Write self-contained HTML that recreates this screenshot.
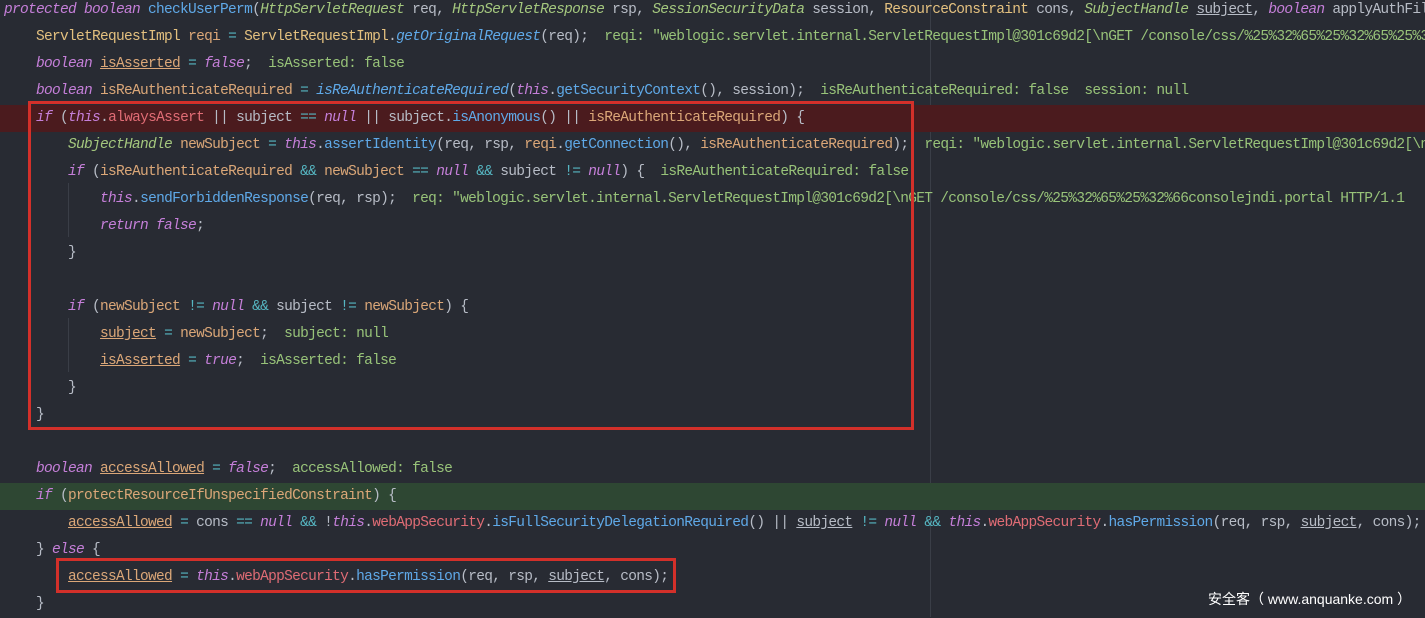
<!DOCTYPE html>
<html><head><meta charset="utf-8"><style>
html,body{margin:0;padding:0;background:#282b33;width:1425px;height:617px;overflow:hidden}
.ed{position:absolute;left:0;top:-3px;width:1425px;font-family:"Liberation Mono",monospace;font-size:14.5px;letter-spacing:-0.7px;color:#b7bcc6}
.l{height:27px;line-height:27px;white-space:pre;padding-left:4px;position:relative}
.k{color:#c57fd9;font-style:italic}
.t{color:#a4c77e;font-style:italic}
.c{color:#e3c07f}
.v{color:#dba778}
.m{color:#5fa9e8}
.mi{color:#5fa9e8;font-style:italic}
.f{color:#e06c75}
.o{color:#56b6c2}
.g{color:#98c379}
.u{text-decoration:underline}
.red{background:#4b1b1e}
.grn{background:#2e4733}
.box{position:absolute;border:3px solid #d3302a;box-sizing:border-box}
.vl{position:absolute;width:1px;background:#3a3e47}
.wm{position:absolute;left:1208px;top:589px;color:#fff;font-family:"Liberation Sans","Noto Sans CJK SC",sans-serif;font-size:14px}
</style></head><body>
<div class="vl" style="left:930px;top:0;height:617px"></div>
<div class="vl" style="left:68px;top:183px;height:54px"></div>
<div class="vl" style="left:68px;top:318px;height:54px"></div>
<div class="ed">
<div class="l"><span class="k">protected boolean</span> <span class="m">checkUserPerm</span>(<span class="t">HttpServletRequest</span> req, <span class="t">HttpServletResponse</span> rsp, <span class="t">SessionSecurityData</span> session, <span class="c">ResourceConstraint</span> cons, <span class="t">SubjectHandle</span> <span class="u">subject</span>, <span class="k">boolean</span> applyAuthFilter</div>
<div class="l">    <span class="c">ServletRequestImpl</span> <span class="v">reqi</span> <span class="o">=</span> <span class="c">ServletRequestImpl</span>.<span class="mi">getOriginalRequest</span>(req);  <span class="g">reqi: "weblogic.servlet.internal.ServletRequestImpl@301c69d2[\nGET /console/css/%25%32%65%25%32%65%25%32%66</span></div>
<div class="l">    <span class="k">boolean</span> <span class="v u">isAsserted</span> <span class="o">=</span> <span class="k">false</span>;  <span class="g">isAsserted: false</span></div>
<div class="l">    <span class="k">boolean</span> <span class="v">isReAuthenticateRequired</span> <span class="o">=</span> <span class="mi">isReAuthenticateRequired</span>(<span class="k">this</span>.<span class="m">getSecurityContext</span>(), session);  <span class="g">isReAuthenticateRequired: false  session: null</span></div>
<div class="l red">    <span class="k">if</span> (<span class="k">this</span>.<span class="f">alwaysAssert</span> || subject <span class="o">==</span> <span class="k">null</span> || subject.<span class="m">isAnonymous</span>() || <span class="v">isReAuthenticateRequired</span>) {</div>
<div class="l">        <span class="t">SubjectHandle</span> <span class="v">newSubject</span> <span class="o">=</span> <span class="k">this</span>.<span class="m">assertIdentity</span>(req, rsp, <span class="v">reqi</span>.<span class="m">getConnection</span>(), <span class="v">isReAuthenticateRequired</span>);  <span class="g">reqi: "weblogic.servlet.internal.ServletRequestImpl@301c69d2[\nGET</span></div>
<div class="l">        <span class="k">if</span> (<span class="v">isReAuthenticateRequired</span> <span class="o">&amp;&amp;</span> <span class="v">newSubject</span> <span class="o">==</span> <span class="k">null</span> <span class="o">&amp;&amp;</span> subject <span class="o">!=</span> <span class="k">null</span>) {  <span class="g">isReAuthenticateRequired: false</span></div>
<div class="l">            <span class="k">this</span>.<span class="m">sendForbiddenResponse</span>(req, rsp);  <span class="g">req: "weblogic.servlet.internal.ServletRequestImpl@301c69d2[\nGET /console/css/%25%32%65%25%32%66consolejndi.portal HTTP/1.1</span></div>
<div class="l">            <span class="k">return false</span>;</div>
<div class="l">        }</div>
<div class="l"> </div>
<div class="l">        <span class="k">if</span> (<span class="v">newSubject</span> <span class="o">!=</span> <span class="k">null</span> <span class="o">&amp;&amp;</span> subject <span class="o">!=</span> <span class="v">newSubject</span>) {</div>
<div class="l">            <span class="v u">subject</span> <span class="o">=</span> <span class="v">newSubject</span>;  <span class="g">subject: null</span></div>
<div class="l">            <span class="v u">isAsserted</span> <span class="o">=</span> <span class="k">true</span>;  <span class="g">isAsserted: false</span></div>
<div class="l">        }</div>
<div class="l">    }</div>
<div class="l"> </div>
<div class="l">    <span class="k">boolean</span> <span class="v u">accessAllowed</span> <span class="o">=</span> <span class="k">false</span>;  <span class="g">accessAllowed: false</span></div>
<div class="l grn">    <span class="k">if</span> (<span class="v">protectResourceIfUnspecifiedConstraint</span>) {</div>
<div class="l">        <span class="v u">accessAllowed</span> <span class="o">=</span> cons <span class="o">==</span> <span class="k">null</span> <span class="o">&amp;&amp;</span> !<span class="k">this</span>.<span class="f">webAppSecurity</span>.<span class="m">isFullSecurityDelegationRequired</span>() || <span class="u">subject</span> <span class="o">!=</span> <span class="k">null</span> <span class="o">&amp;&amp;</span> <span class="k">this</span>.<span class="f">webAppSecurity</span>.<span class="m">hasPermission</span>(req, rsp, <span class="u">subject</span>, cons);</div>
<div class="l">    } <span class="k">else</span> {</div>
<div class="l">        <span class="v u">accessAllowed</span> <span class="o">=</span> <span class="k">this</span>.<span class="f">webAppSecurity</span>.<span class="m">hasPermission</span>(req, rsp, <span class="u">subject</span>, cons);</div>
<div class="l">    }</div>
</div>
<div class="box" style="left:28px;top:101px;width:886px;height:329px"></div>
<div class="box" style="left:56px;top:558px;width:620px;height:35px"></div>
<div class="wm">安全客（ www.anquanke.com ）</div>
</body></html>
